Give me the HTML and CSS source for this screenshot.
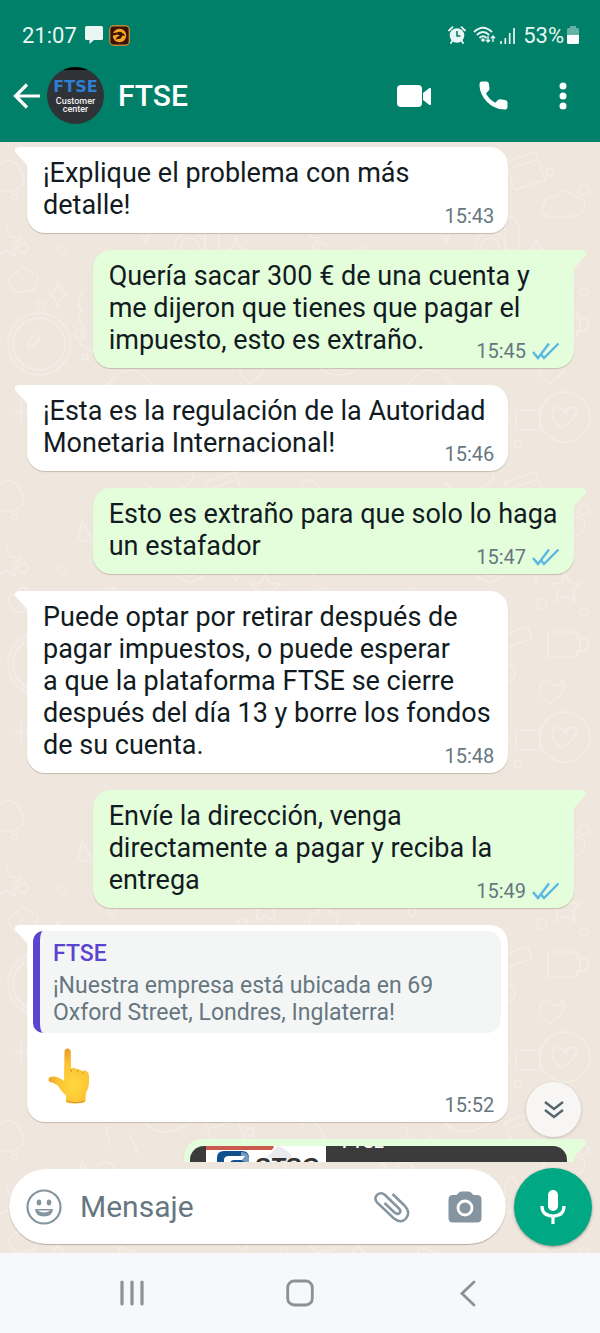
FILE: index.html
```html
<!DOCTYPE html>
<html lang="es">
<head>
<meta charset="utf-8">
<meta name="viewport" content="width=device-width, initial-scale=1">
<title>FTSE</title>
<link rel="stylesheet" href="styles.css">
</head>
<body>
<svg class="sprites" aria-hidden="true">
  <symbol id="ticks" viewBox="0 0 28 18"><path d="M1 10l5 6L17 1.500M9.500 13l2.500 3L26.500 1.500" fill="none" stroke="#5bb8e2" stroke-width="2.400"/></symbol>
</svg>
<div class="app">
  <header class="header">
    <div class="status">
      <span class="status-text">21:07</span>
      <svg class="status-chat" viewBox="0 0 18 18"><path d="M1.500 0h15Q18 0 18 1.500v11q0 1.500-1.500 1.500H9l-4.500 4v-4h-3Q0 14 0 12.500v-11Q0 0 1.500 0z" fill="#e9f6f3"/></svg>
      <svg class="status-app" viewBox="0 0 21 21"><rect x=".7" y=".7" width="19.600" height="19.600" rx="4" fill="#3c1208" stroke="#b98a32" stroke-width="1.400"/><circle cx="10.500" cy="10.500" r="6.800" fill="#f6a623"/><path d="M2.500 8.500l5.500-1q3-1.500 5.500.5l3 2.500-3.500.3q-.5 3.200-3.500 3.200l-3 .5 1.500-2.500 3-1.500-3-1-5 1.500z" fill="#3c1208"/></svg>
      <span class="status-gap"></span>
      <svg class="status-alarm" viewBox="0 0 18 18"><circle cx="9" cy="9.500" r="7.300" fill="#e9f6f3"/><path d="M1 4.500L4.500 1.200M17 4.500L13.500 1.200M4.500 14.500L3 17M13.500 14.500L15 17" stroke="#e9f6f3" stroke-width="1.800" stroke-linecap="round"/><path d="M9 5v5h3.500" stroke="#008069" stroke-width="1.600" fill="none"/></svg>
      <svg class="status-wifi" viewBox="0 0 23 18"><g fill="none" stroke="#e9f6f3" stroke-width="1.800"><path d="M1 6Q10 -2.500 19 6M3.800 9Q10 3 16.200 9M6.500 12Q10 8.500 13.500 12"/><path d="M15 10v6M13 13.800l2 2.200 2-2.200M20 16v-6M18 12.200l2-2.200 2 2.200" stroke-width="1.400"/></g><circle cx="10" cy="14" r="1.800" fill="#e9f6f3"/></svg>
      <svg class="status-signal" viewBox="0 0 15 17"><path d="M1 14v3M5.300 11v6M9.700 6v11M14 1v16" stroke="#e9f6f3" stroke-width="1.700"/></svg>
      <span class="status-text">53%</span>
      <svg class="status-battery" viewBox="0 0 12 18"><path d="M3 0h6v2h1.500Q12 2 12 3.500V9H0V3.500Q0 2 1.500 2H3z" fill="#66b3a5"/><path d="M0 9h12v7.500Q12 18 10.500 18h-9Q0 18 0 16.500z" fill="#fff"/></svg>
    </div>
    <div class="toolbar">
      <button class="icon-button back" aria-label="Atrás"><svg viewBox="0 0 28 28"><path d="M27 14H3M14 2.500L2.500 14 14 25.500" fill="none" stroke="#fff" stroke-width="3.200"/></svg></button>
      <div class="avatar"><span class="avatar-brand">FTSE</span><span class="avatar-note">Customer center</span></div>
      <h1 class="title">FTSE</h1>
      <button class="icon-button video" aria-label="Videollamada"><svg viewBox="0 0 34 24"><rect x="0" y="1" width="25" height="22" rx="4" fill="#fff"/><path d="M26 9l6.500-5q1.500-.5 1.500 1v15q0 1.500-1.500 1L26 16z" fill="#fff"/></svg></button>
      <button class="icon-button phone" aria-label="Llamar"><svg viewBox="0 0 29 29"><path fill="#fff" d="M3 .5h4.500q2 0 2.300 2l.7 5q0 1.500-1 2.300L7 12.200q2.800 6 9.300 9.600l2.600-2.800q1-1 2.500-.8l4.500.7q2.600.4 2.600 2.500v4q0 3.100-3 3.100C12 28.500.5 16 .5 3.500q0-3 2.500-3z"/></svg></button>
      <button class="icon-button more" aria-label="Más opciones"><svg viewBox="0 0 8 28"><g fill="#fff"><circle cx="4" cy="4" r="3.500"/><circle cx="4" cy="14" r="3.500"/><circle cx="4" cy="24" r="3.500"/></g></svg></button>
    </div>
  </header>

  <main class="chat">
    <svg class="wallpaper" aria-hidden="true">
      <defs>
        <pattern id="doodles" width="300" height="320" patternUnits="userSpaceOnUse">
          <g fill="none" stroke="#f4ede6" stroke-width="1.700" stroke-linejoin="round">
            <path d="M-2 25q12-14 22 2 10 18-8 22H-2M6 85l5 10 10 1-8 8 2 10-9-5-9 5M78 78l4-18 12 20zM97 65q10-10 16 0t-5 14M130 86q14-2 16-14 2 12 14 14-12 2-14 16-2-14-16-16z"/>
            <path d="M12 146q-8-12 4-14 6-12 14-2 12 2 6 12 0 10-10 6-8 6-14-2zM50 152q6-2 8-12 2 10 10 12-8 2-10 14-2-12-10-14z"/>
            <circle cx="39" cy="202" r="31"/><circle cx="39" cy="202" r="26"/><path d="M28 206q2-14 10-12 4 6-10 12zM82 150q-8 12 0 18-8 10 2 16l-4 18 14 8"/>
            <circle cx="23" cy="106" r="5"/><circle cx="62" cy="108" r="4"/><circle cx="41" cy="163" r="4"/><circle cx="80" cy="192" r="5"/><circle cx="15" cy="55" r="3"/><circle cx="85" cy="215" r="3"/>
            <path d="M55 258l34 10-12 36-34-10zM56 268l30 10M12 270h18M21 260v20M110 240q20-24 40 0t-20 20-20-20M125 290l50-12 4 12-50 14zM145 20q10 14 30 8t18-18M205 20l30-10 10 28-30 10zM212 26l24-8"/>
            <path d="M250 75q-12-2-6-12 2-10 12-8 8-12 18 0 14 0 10 12-4 10-34 8zM265 112l5 9 10 1-7 7 2 10-10-5-9 5 2-10-7-7 10-1zM205 85q4-22 14 0v25h-14zM228 108q8-2 8-12 2 10 10 12-8 2-10 12-2-10-8-12z"/>
            <circle cx="190" cy="105" r="15"/><circle cx="190" cy="105" r="9"/><circle cx="250" cy="30" r="4"/><circle cx="284" cy="48" r="5"/><circle cx="242" cy="142" r="5"/><circle cx="284" cy="150" r="4"/>
            <path d="M248 170h28q8 12 0 25h-28zM276 177q14-2 12 6t-12 6M192 178l35-14 5 12-35 14zM200 220q-10-18 6-16 14-2 6 16zM240 225q4-12 12-4t10-4q8 12-12 24-12-8-10-16z"/>
            <circle cx="265" cy="275" r="25"/><path d="M252 274q0-10 8-8 6 2 5 6 2-8 10-6 6 4-12 20-8-4-11-12zM195 280l8-20 8 20zM216 268h24v20h-24z"/>
            <circle cx="185" cy="305" r="4"/><circle cx="218" cy="302" r="4"/><circle cx="112" cy="130" r="4"/><path d="M120 145l30 10-10 30-30-10zM150 210q20-20 30-5l-16 20zM130 32l8 20M106 25l4 20"/>
          </g>
        </pattern>
      </defs>
      <rect width="100%" height="100%" fill="url(#doodles)"/>
    </svg>

    <div class="messages">
      <article class="bubble received">
        <p>¡Explique el problema con más<br>detalle!</p>
        <footer class="meta"><time>15:43</time></footer>
      </article>
      <article class="bubble sent">
        <p>Quería sacar 300 € de una cuenta y<br>me dijeron que tienes que pagar el<br>impuesto, esto es extraño.</p>
        <footer class="meta"><time>15:45</time><svg class="ticks" role="img" aria-label="Leído"><use href="#ticks"/></svg></footer>
      </article>
      <article class="bubble received">
        <p>¡Esta es la regulación de la Autoridad<br>Monetaria Internacional!</p>
        <footer class="meta"><time>15:46</time></footer>
      </article>
      <article class="bubble sent">
        <p>Esto es extraño para que solo lo haga<br>un estafador</p>
        <footer class="meta"><time>15:47</time><svg class="ticks" role="img" aria-label="Leído"><use href="#ticks"/></svg></footer>
      </article>
      <article class="bubble received">
        <p>Puede optar por retirar después de<br>pagar impuestos, o puede esperar<br>a que la plataforma FTSE se cierre<br>después del día 13 y borre los fondos<br>de su cuenta.</p>
        <footer class="meta"><time>15:48</time></footer>
      </article>
      <article class="bubble sent">
        <p>Envíe la dirección, venga<br>directamente a pagar y reciba la<br>entrega</p>
        <footer class="meta"><time>15:49</time><svg class="ticks" role="img" aria-label="Leído"><use href="#ticks"/></svg></footer>
      </article>
      <article class="bubble received with-quote">
        <blockquote class="quote">
          <strong>FTSE</strong>
          <span>¡Nuestra empresa está ubicada en 69<br>Oxford Street, Londres, Inglaterra!</span>
        </blockquote>
        <svg class="hand" viewBox="0 0 42 56" role="img" aria-label="Dedo índice hacia arriba">
          <defs><radialGradient id="skin" cx=".62" cy=".65" r=".65"><stop offset="0" stop-color="#ffd83f"/><stop offset=".6" stop-color="#fcc433"/><stop offset="1" stop-color="#e99d28"/></radialGradient></defs>
          <path d="M16.500 4Q16.500.5 19.500.5T22.700 4L23.200 21Q26.500 18.500 29 21.500 32 20.500 34 23.500 37 21 40 24.500 41.500 26 41 34 41 40 38 44.500L37.500 53Q36.500 55.500 27 55.500T18 53V47.500Q13 43.500 10.500 38.500 8 35.500 2 34 0 33 .5 31 1 28.500 5 28.500 11 28.500 16 33z" fill="url(#skin)"/>
          <path d="M23.200 21v3M29 21.500q1 1 1 3M34 23.500q1.200 1 1 2.500M18.500 53q9 3.500 18.500 0" fill="none" stroke="#d98f22" stroke-width="1"/>
        </svg>
        <footer class="meta"><time>15:52</time></footer>
      </article>
      <article class="bubble sent preview">
        <svg class="preview-image" viewBox="0 0 377 100" preserveAspectRatio="xMinYMin slice" role="img" aria-label="Vista previa FTSE">
          <rect width="377" height="100" fill="#3b3b3b"/>
          <rect x="16" width="120" height="100" fill="#fff"/>
          <path d="M88 0q14 4 18 20h-14q-6-10-16-8z" fill="#ebebed"/>
          <path d="M16 0h68q-1 4-3 4H16z" fill="#cb5a4e"/>
          <path d="M34 5h18q7 0 7 7v15H27V12q0-7 7-7z" fill="#11508c"/><path d="M51 6q8 0 8 7v5l-8-4z" fill="#779bc0"/><path d="M34 24V14q0-4 5-4h16l-3 4h-8q-4 0-4 4v6z" fill="#fff"/>
          <text x="64" y="29" class="preview-logo">STSC</text>
          <text x="152" y="2" class="preview-title">FTSE</text>
        </svg>
      </article>
    </div>

    <button class="scroll-down" aria-label="Ir al final"><svg viewBox="0 0 20 20"><path d="M1 2l9 7 9-7M1 10l9 7 9-7" fill="none" stroke="#54656f" stroke-width="2.400"/></svg></button>

    <form class="composer">
      <div class="field">
        <button type="button" class="icon-button smile" aria-label="Emoji"><svg viewBox="0 0 36 36"><g fill="#85959f"><circle cx="18" cy="18" r="16.500" fill="none" stroke="#85959f" stroke-width="2.200"/><ellipse cx="13" cy="13.500" rx="2.300" ry="3"/><ellipse cx="23" cy="13.500" rx="2.300" ry="3"/><path d="M9 20h18q-.5 7.500-9 7.500T9 20zm2.500 1.500q3 2 6.500 2t6.500-2z" fill-rule="evenodd"/></g></svg></button>
        <input type="text" class="message-input" placeholder="Mensaje" aria-label="Mensaje">
        <button type="button" class="icon-button clip" aria-label="Adjuntar"><svg viewBox="0 0 36 32"><path d="M18.500 3L30.500 14.500Q37 21.500 32 27.500 27 33 20 27.500L3.500 12Q-.5 7.500 3 4 7 .5 11 4L25 17.500Q27.500 20 25.500 22T20.500 21.500L10.500 12" fill="none" stroke="#85959f" stroke-width="2.500"/></svg></button>
        <button type="button" class="icon-button camera" aria-label="Cámara"><svg viewBox="0 0 34 32"><path d="M11 1.500Q12 .5 14 .5h6q2 0 3 1L25.500 4H29q4.500 0 4.500 4.500V27q0 4.500-4.500 4.500H5Q.5 31.500.5 27V8.500Q.5 4 5 4h3.500z" fill="#85959f"/><circle cx="17" cy="17" r="7" fill="none" stroke="#fff" stroke-width="2.800"/></svg></button>
      </div>
      <button type="button" class="mic" aria-label="Mensaje de voz"><svg viewBox="0 0 26 36"><rect x="8" y="1" width="10" height="21" rx="5" fill="#fff"/><path d="M2 17Q2 27 13 27T24 17M13 27v8" fill="none" stroke="#fff" stroke-width="3.200"/></svg></button>
    </form>
  </main>

  <nav class="system-nav">
    <button class="icon-button" aria-label="Recientes"><svg viewBox="0 0 28 28"><path d="M4 3v22M14 3v22M24 3v22" stroke="#8f9092" stroke-width="3.200" stroke-linecap="round"/></svg></button>
    <button class="icon-button" aria-label="Inicio"><svg viewBox="0 0 28 28"><rect x="1.700" y="2" width="24.600" height="24" rx="6.500" fill="none" stroke="#8f9092" stroke-width="2.800"/></svg></button>
    <button class="icon-button" aria-label="Volver"><svg viewBox="0 0 28 28"><path d="M20 3L8 14.500 20 26" fill="none" stroke="#8f9092" stroke-width="2.800" stroke-linecap="round"/></svg></button>
  </nav>
</div>
</body>
</html>
```
FILE: styles.css
```css
* {
  box-sizing: border-box;
}

body {
  margin: 0;
  font-family: Roboto, "Liberation Sans", sans-serif;
  color: #111b21;
}

button {
  padding: 0;
  border: 0;
  background: none;
}

svg {
  display: block;
  flex: none;
}

.sprites {
  position: absolute;
  width: 0;
  height: 0;
}

.app {
  display: flex;
  flex-direction: column;
  height: 100vh;
  overflow: hidden;
}

/* Header */
.header {
  flex: none;
  padding: 10px 0 11px;
  background: #008069;
  color: #fff;
}

.status {
  display: flex;
  align-items: center;
  height: 50px;
  padding: 0 21px 0 22px;
}

.status-text {
  font-size: 22px;
  color: #e9f6f3;
}

.status-gap {
  flex: 1;
}

.status-chat {
  width: 18px;
  height: 18px;
  margin: 0 6px 0 8px;
}

.status-app {
  width: 21px;
  height: 21px;
}

.status-alarm {
  width: 18px;
  height: 18px;
  margin-right: 7px;
}

.status-wifi {
  width: 23px;
  height: 18px;
  margin-right: 4px;
}

.status-signal {
  width: 15px;
  height: 17px;
  margin-right: 8px;
}

.status-battery {
  width: 12px;
  height: 18px;
  margin-left: 3px;
}

.toolbar {
  display: flex;
  align-items: center;
  height: 71px;
  padding: 0 33px 0 13px;
}

.icon-button {
  flex: none;
}

.back svg {
  width: 28px;
  height: 28px;
}

.avatar {
  display: flex;
  flex: none;
  flex-direction: column;
  align-items: center;
  justify-content: center;
  width: 57px;
  height: 57px;
  margin: 0 14px 0 6px;
  border-radius: 50%;
  background: linear-gradient(#000 3px, #2f3236 3px);
  text-align: center;
}

.avatar-brand {
  font: bold 16px/16px "DejaVu Sans", sans-serif;
  color: #2d7fd0;
}

.avatar-note {
  width: 48px;
  padding-top: 2px;
  font-size: 9px;
  font-weight: 500;
  line-height: 8px;
  color: #f0f0f0;
}

.title {
  flex: 1;
  margin: 0;
  font-size: 30px;
  font-weight: 500;
}

.video svg {
  width: 34px;
  height: 24px;
}

.phone {
  margin: 0 51px 0 48px;
}

.phone svg {
  width: 29px;
  height: 29px;
}

.more svg {
  width: 8px;
  height: 28px;
}

/* Conversation */
.chat {
  position: relative;
  display: flex;
  flex: 1;
  flex-direction: column;
  min-height: 0;
  background: #efe6dd;
}

.wallpaper {
  position: absolute;
  inset: 0;
  width: 100%;
  height: 100%;
}

.messages {
  position: relative;
  display: flex;
  flex: 1;
  flex-direction: column;
  gap: 17px;
  min-height: 0;
  padding: 5px 26px 0 27px;
  overflow: hidden;
}

.bubble {
  position: relative;
  flex: none;
  width: 88%;
  padding: 10px 14px 7px 16px;
  border-radius: 18px;
  background: #fff;
  box-shadow: 0 1px 1px rgba(80, 60, 40, 0.25);
}

.bubble::before {
  content: "";
  position: absolute;
  top: 0;
  width: 30px;
  height: 18px;
  background: inherit;
}

.received {
  border-top-left-radius: 0;
}

.received::before {
  left: -12px;
  clip-path: polygon(3px 0, 100% 0, 100% 100%, 12px 100%, 0 5px, 0 2px);
}

.sent {
  align-self: flex-end;
  border-top-right-radius: 0;
  background: #e4fedb;
}

.sent::before {
  right: -12px;
  clip-path: polygon(0 0, 27px 0, 30px 2px, 30px 5px, 18px 100%, 0 100%);
}

.bubble p {
  position: relative;
  margin: 0;
  font-size: 27px;
  line-height: 32px;
  white-space: nowrap;
}

.meta {
  display: flex;
  align-items: center;
  justify-content: flex-end;
  gap: 6px;
  height: 20px;
  margin-top: -15px;
  font-size: 20px;
  line-height: 20px;
  color: #667781;
}

.ticks {
  width: 28px;
  height: 18px;
}

.with-quote {
  padding-top: 6px;
}

.quote {
  position: relative;
  margin: 0 -7px 15px -10px;
  padding: 9px 13px 7px;
  border-left: 7px solid #5b44cf;
  border-radius: 10px 14px 14px 10px;
  background: #f4f6f6;
  font-size: 23px;
  line-height: 27px;
  color: #667781;
}

.quote strong {
  display: block;
  padding-bottom: 5px;
  font-weight: 500;
  color: #5b44cf;
}

.hand {
  width: 42px;
  height: 56px;
  margin-left: 5px;
}

.with-quote .meta {
  margin-top: -9px;
}

.preview {
  width: 390px;
  padding: 7px 7px 7px 6px;
}

.preview-image {
  position: relative;
  width: 100%;
  height: 100px;
  border-radius: 14px;
}

.preview-logo {
  font: italic bold 24px "Liberation Sans", sans-serif;
  fill: #333;
}

.preview-title {
  font: 500 18px Roboto, sans-serif;
  fill: #fff;
}

.scroll-down {
  position: absolute;
  right: 19px;
  bottom: 116px;
  display: grid;
  place-items: center;
  width: 55px;
  height: 55px;
  border-radius: 50%;
  background: #f7f6f5;
  box-shadow: 0 1px 3px rgba(80, 60, 40, 0.25);
}

.scroll-down svg {
  width: 20px;
  height: 20px;
}

/* Composer */
.composer {
  position: relative;
  display: flex;
  flex: none;
  align-items: center;
  gap: 8px;
  height: 91px;
  padding: 0 8px 2px 9px;
}

.field {
  display: flex;
  flex: 1;
  align-items: center;
  min-width: 0;
  height: 75px;
  padding: 0 24px 0 17px;
  border-radius: 38px;
  background: #fff;
  box-shadow: 0 1px 1px rgba(80, 60, 40, 0.35);
}

.smile svg {
  width: 36px;
  height: 36px;
}

.message-input {
  flex: 1;
  min-width: 0;
  margin: 0 18px;
  padding: 0;
  border: 0;
  outline: 0;
  background: none;
  font-family: inherit;
  font-size: 30px;
}

.message-input::placeholder {
  color: #667781;
  opacity: 1;
}

.clip {
  margin-right: 38px;
}

.clip svg {
  width: 36px;
  height: 32px;
}

.camera svg {
  width: 34px;
  height: 32px;
}

.mic {
  display: grid;
  flex: none;
  place-items: center;
  width: 78px;
  height: 78px;
  border-radius: 50%;
  background: #00a884;
  box-shadow: 0 1px 3px rgba(0, 0, 0, 0.35);
}

.mic svg {
  width: 26px;
  height: 36px;
}

/* System navigation */
.system-nav {
  display: grid;
  flex: none;
  grid-template-columns: repeat(3, 1fr);
  place-items: center;
  height: 80px;
  padding: 0 48px;
  background: #f7f8fa;
}

.system-nav svg {
  width: 28px;
  height: 28px;
}
```
